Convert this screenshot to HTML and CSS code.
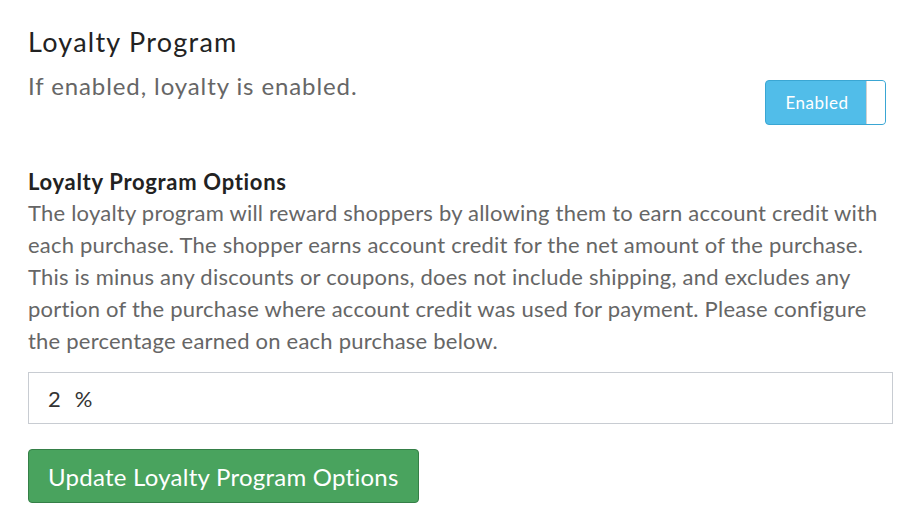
FILE: index.html
```html
<!DOCTYPE html>
<html>
<head>
<meta charset="utf-8">
<link rel="stylesheet" href="styles.css">
</head>
<body>
<div class="page">
  <section class="setting">
    <div class="setting-text">
      <h2 class="setting-title">Loyalty Program</h2>
      <p class="setting-desc">If enabled, loyalty is enabled.</p>
    </div>
    <div class="toggle">
      <span class="toggle-label">Enabled</span>
      <span class="toggle-knob"></span>
    </div>
  </section>
  <section class="options">
    <h3 class="options-title">Loyalty Program Options</h3>
    <p class="options-desc">The loyalty program will reward shoppers by allowing them to earn account credit with each purchase. The shopper earns account credit for the net amount of the purchase. This is minus any discounts or coupons, does not include shipping, and excludes any portion of the purchase where account credit was used for payment. Please configure the percentage earned on each purchase below.</p>
    <div class="percent-input"><span class="value">2</span><span class="unit">%</span></div>
    <button class="btn-update">Update Loyalty Program Options</button>
  </section>
</div>
</body>
</html>
```
FILE: styles.css
```css
html, body { margin: 0; padding: 0; background: #fff; }
body { font-family: Lato, "Open Sans", sans-serif; }
.page { padding: 24px 6px 0 28px; width: 865px; }
.setting { display: flex; justify-content: space-between; align-items: flex-start; }
.setting-title { margin: 0; font-weight: 400; font-size: 27px; line-height: 36px; color: #222; letter-spacing: 1.25px; }
.setting-desc { margin: 10px 0 0; font-size: 24px; line-height: 32px; color: #666; letter-spacing: 0.9px; }
.toggle { margin-top: 56px; margin-right: 7px; width: 119px; height: 43px; border: 1px solid #3aa6d3; border-radius: 4px; background: #51bde9; display: flex; align-items: stretch; box-sizing: content-box; }
.toggle-label { flex: 1; display: flex; align-items: center; justify-content: center; color: #fff; font-family: Lato, sans-serif; font-size: 17px; letter-spacing: 0.5px; padding-left: 2px; }
.toggle-knob { width: 18px; background: #fff; border-radius: 0 3px 3px 0; border-left: 1px solid #d0d0d0; }
.options { margin-top: 42px; }
.options-title { margin: 0; font-size: 22px; line-height: 30px; font-weight: 700; color: #222; letter-spacing: 0.7px; }
.options-desc { margin: 0; font-size: 22px; line-height: 32px; color: #666; letter-spacing: 0.22px; }
.percent-input { margin-top: 15px; height: 50px; border: 1px solid #c8ccd2; display: flex; align-items: center; padding-left: 19px; font-size: 22px; color: #333; gap: 14px; }
.btn-update { margin-top: 25px; display: block; background: #49a35e; border: 1px solid #357f47; border-radius: 4px; color: #fff; font-family: Lato, sans-serif; font-size: 24px; letter-spacing: 0.25px; height: 54px; padding: 0 19px; }
```
